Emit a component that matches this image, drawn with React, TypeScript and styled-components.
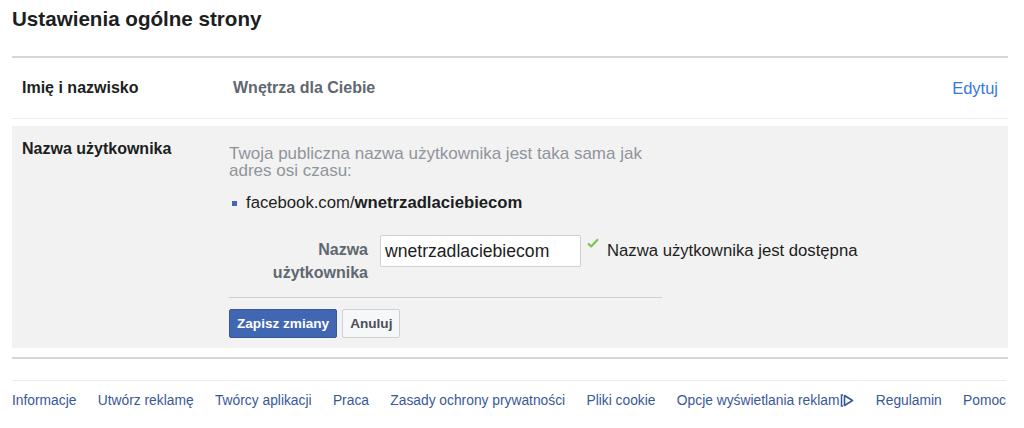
import React from "react";
import styled, { createGlobalStyle } from "styled-components";

const Global = createGlobalStyle`
  html, body { margin: 0; padding: 0; background: #fff; }
  body { font-family: "Liberation Sans", Arial, sans-serif; color: #1c1e21; }
  * { box-sizing: border-box; }
`;

const Page = styled.div`
  width: 1024px;
  height: 428px;
  padding: 0 16px 0 12px;
  overflow: hidden;
`;

const Title = styled.h1`
  margin: 0;
  height: 58px;
  padding-top: 7px;
  font-size: 20.6px;
  font-weight: bold;
  color: #1c1e21;
  border-bottom: 2px solid #d3d6db;
`;

const Row = styled.div`
  display: grid;
  grid-template-columns: 211px 1fr auto;
  align-items: center;
  height: 61px;
  padding: 0 10px;
  border-bottom: 1px solid #e9ebee;
`;

const Label = styled.div`
  font-size: 16px;
  font-weight: bold;
  color: #1c1e21;
`;

const Value = styled.div`
  font-size: 16px;
  font-weight: bold;
  color: #606770;
`;

const EditLink = styled.a`
  font-size: 16.5px;
  color: #3578e5;
  text-decoration: none;
`;

const Panel = styled.div`
  margin-top: 7px;
  height: 222px;
  background: #f2f2f2;
  display: grid;
  grid-template-columns: 207px 1fr;
  padding: 14px 10px 0 10px;
`;

const PanelBody = styled.div`
  display: flex;
  flex-direction: column;
  width: 433px;
`;

const Desc = styled.p`
  margin: 5px 0 0 0;
  font-size: 17px;
  line-height: 17px;
  color: #90949c;
`;

const UrlLine = styled.div`
  display: flex;
  align-items: center;
  gap: 9px;
  margin: 14px 0 0 3px;
  font-size: 16.7px;
  color: #1c1e21;
  b { font-weight: bold; }
`;

const Bullet = styled.span`
  flex-shrink: 0;
  width: 5px;
  height: 5px;
  background: #4267b2;
`;

const FieldRow = styled.div`
  display: flex;
  align-items: flex-start;
  margin-top: 22px;
  white-space: nowrap;
  & > * { flex-shrink: 0; }
`;

const FieldLabel = styled.label`
  width: 139px;
  text-align: right;
  padding-top: 3px;
  font-size: 16px;
  line-height: 23px;
  font-weight: bold;
  color: #606770;
`;

const Input = styled.input`
  margin-left: 12px;
  width: 201px;
  height: 32px;
  border: 1px solid #ccd0d5;
  border-radius: 2px;
  background: #fff;
  padding: 0 4px;
  font-family: "Liberation Sans", Arial, sans-serif;
  font-size: 17.6px;
  color: #1c1e21;
  outline: none;
`;

const Status = styled.div`
  display: flex;
  align-items: flex-start;
  margin-left: 6px;
  padding-top: 3px;
  font-size: 16.7px;
  color: #1c1e21;
  span { padding-top: 3px; margin-left: 8px; }
`;

const Sep = styled.div`
  margin-top: 13px;
  border-top: 1px solid #ccd0d5;
`;

const Buttons = styled.div`
  display: flex;
  gap: 5px;
  margin-top: 11px;
`;

const Btn = styled.button<{ $primary?: boolean }>`
  height: 29px;
  padding: 0 7px;
  border-radius: 2px;
  font-family: "Liberation Sans", Arial, sans-serif;
  font-size: 13.6px;
  font-weight: bold;
  cursor: pointer;
  border: 1px solid ${(p) => (p.$primary ? "#365899" : "#ced0d4")};
  background: ${(p) => (p.$primary ? "#4267b2" : "#f6f7f9")};
  color: ${(p) => (p.$primary ? "#fff" : "#4b4f56")};
`;

const BottomRule = styled.div`
  margin-top: 9px;
  border-top: 2px solid #d3d6db;
`;

const Footer = styled.nav`
  margin-top: 21px;
  margin-right: 2px;
  border-top: 1px solid #e9ebee;
  display: flex;
  justify-content: space-between;
  padding-top: 12px;
`;

const FootLink = styled.a`
  display: inline-flex;
  align-items: center;
  font-size: 13.8px;
  color: #385898;
  text-decoration: none;
`;

const Check = () => (
  <svg width="12" height="10" viewBox="0 0 12 10">
    <path d="M1 5.5 L4.2 8.4 L11 1.2" fill="none" stroke="#7fc24e" strokeWidth="2.2" strokeLinejoin="round" />
  </svg>
);

const AdChoices = () => (
  <svg width="14" height="13" viewBox="0 0 14 13" style={{ marginLeft: 1 }}>
    <path d="M3 1 H1.5 V12 H3" stroke="#385898" strokeWidth="1.5" fill="none" />
    <path d="M4.5 1.5 L12.5 6.5 L4.5 11.5 Z" stroke="#385898" strokeWidth="1.6" fill="none" strokeLinejoin="round" />
  </svg>
);

const links = [
  "Informacje",
  "Utwórz reklamę",
  "Twórcy aplikacji",
  "Praca",
  "Zasady ochrony prywatności",
  "Pliki cookie",
];

export default function App() {
  return (
    <>
      <Global />
      <Page>
        <Title>Ustawienia ogólne strony</Title>
        <Row>
          <Label>Imię i nazwisko</Label>
          <Value>Wnętrza dla Ciebie</Value>
          <EditLink href="#">Edytuj</EditLink>
        </Row>
        <Panel>
          <Label>Nazwa użytkownika</Label>
          <PanelBody>
            <Desc>Twoja publiczna nazwa użytkownika jest taka sama jak adres osi czasu:</Desc>
            <UrlLine>
              <Bullet />
              <span>
                facebook.com/<b>wnetrzadlaciebiecom</b>
              </span>
            </UrlLine>
            <FieldRow>
              <FieldLabel>
                Nazwa
                <br />
                użytkownika
              </FieldLabel>
              <Input defaultValue="wnetrzadlaciebiecom" />
              <Status>
                <Check />
                <span>Nazwa użytkownika jest dostępna</span>
              </Status>
            </FieldRow>
            <Sep />
            <Buttons>
              <Btn $primary>Zapisz zmiany</Btn>
              <Btn>Anuluj</Btn>
            </Buttons>
          </PanelBody>
        </Panel>
        <BottomRule />
        <Footer>
          {links.map((l) => (
            <FootLink key={l} href="#">{l}</FootLink>
          ))}
          <FootLink href="#">
            Opcje wyświetlania reklam
            <AdChoices />
          </FootLink>
          <FootLink href="#">Regulamin</FootLink>
          <FootLink href="#">Pomoc</FootLink>
        </Footer>
      </Page>
    </>
  );
}
